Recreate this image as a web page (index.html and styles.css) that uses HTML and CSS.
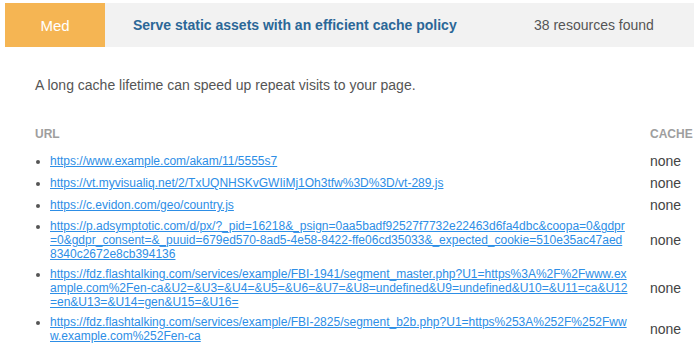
FILE: index.html
```html
<!DOCTYPE html>
<html>
<head>
<meta charset="utf-8">
<link rel="stylesheet" href="styles.css">
</head>
<body>
<div class="page">
  <div class="audit-head">
    <div class="severity">Med</div>
    <div class="audit-title">Serve static assets with an efficient cache policy</div>
    <div class="audit-count">38 resources found</div>
  </div>
  <p class="desc">A long cache lifetime can speed up repeat visits to your page.</p>
  <div class="table">
    <div class="th th-url">URL</div>
    <div class="th th-cache">CACHE</div>

    <div class="td td-url"><div class="item"><a href="#">https://www.example.com/akam/11/5555s7</a></div></div>
    <div class="td td-cache">none</div>

    <div class="td td-url"><div class="item"><a href="#">https://vt.myvisualiq.net/2/TxUQNHSKvGWIiMj1Oh3tfw%3D%3D/vt-289.js</a></div></div>
    <div class="td td-cache">none</div>

    <div class="td td-url"><div class="item"><a href="#">https://c.evidon.com/geo/country.js</a></div></div>
    <div class="td td-cache">none</div>

    <div class="td td-url"><div class="item"><a href="#">https://p.adsymptotic.com/d/px/?_pid=16218&amp;_psign=0aa5badf92527f7732e22463d6fa4dbc&amp;coopa=0&amp;gdpr=0&amp;gdpr_consent=&amp;_puuid=679ed570-8ad5-4e58-8422-ffe06cd35033&amp;_expected_cookie=510e35ac47aed8340c2672e8cb394136</a></div></div>
    <div class="td td-cache">none</div>

    <div class="td td-url"><div class="item"><a href="#">https://fdz.flashtalking.com/services/example/FBI-1941/segment_master.php?U1=https%3A%2F%2Fwww.example.com%2Fen-ca&amp;U2=&amp;U3=&amp;U4=&amp;U5=&amp;U6=&amp;U7=&amp;U8=undefined&amp;U9=undefined&amp;U10=&amp;U11=ca&amp;U12=en&amp;U13=&amp;U14=gen&amp;U15=&amp;U16=</a></div></div>
    <div class="td td-cache">none</div>

    <div class="td td-url"><div class="item"><a href="#">https://fdz.flashtalking.com/services/example/FBI-2825/segment_b2b.php?U1=https%253A%252F%252Fwww.example.com%252Fen-ca</a></div></div>
    <div class="td td-cache">none</div>
  </div>
</div>
</body>
</html>
```
FILE: styles.css
```css
html, body {
  margin: 0;
  padding: 0;
  background: #ffffff;
}
body {
  font-family: "Liberation Sans", Arial, sans-serif;
  color: #555555;
  overflow: hidden;
}
.page {
  padding: 3px 0 0 5px;
}
.audit-head {
  display: flex;
  align-items: center;
  height: 44px;
  background: #f2f2f2;
}
.severity {
  width: 100px;
  height: 44px;
  background: #f5b553;
  color: #ffffff;
  font-size: 15px;
  display: flex;
  align-items: center;
  justify-content: center;
}
.audit-title {
  box-sizing: border-box;
  width: 429px;
  padding-left: 28px;
  font-size: 14px;
  font-weight: bold;
  color: #2b6797;
}
.audit-count {
  font-size: 14px;
  color: #555555;
}
.desc {
  margin: 30px 0 0 30px;
  font-size: 14px;
  line-height: 16px;
  color: #555555;
}
.table {
  margin: 34px 0 0 30px;
  display: grid;
  grid-template-columns: 615px auto;
}
.th {
  font-size: 12px;
  font-weight: bold;
  line-height: 14px;
  color: #9e9e9e;
  padding-bottom: 9px;
  white-space: nowrap;
}
.td {
  padding: 3px 0;
  display: flex;
  align-items: center;
}
.td-url {
  padding-left: 15px;
  padding-right: 22px;
}
.item {
  display: list-item;
  list-style: disc outside;
  width: 578px;
  font-size: 12px;
  color: #555555;
  word-break: break-all;
}
.item a {
  color: #2d8ee6;
  text-decoration: underline;
}
.td-cache {
  font-size: 14px;
  color: #444444;
  white-space: nowrap;
}
```
